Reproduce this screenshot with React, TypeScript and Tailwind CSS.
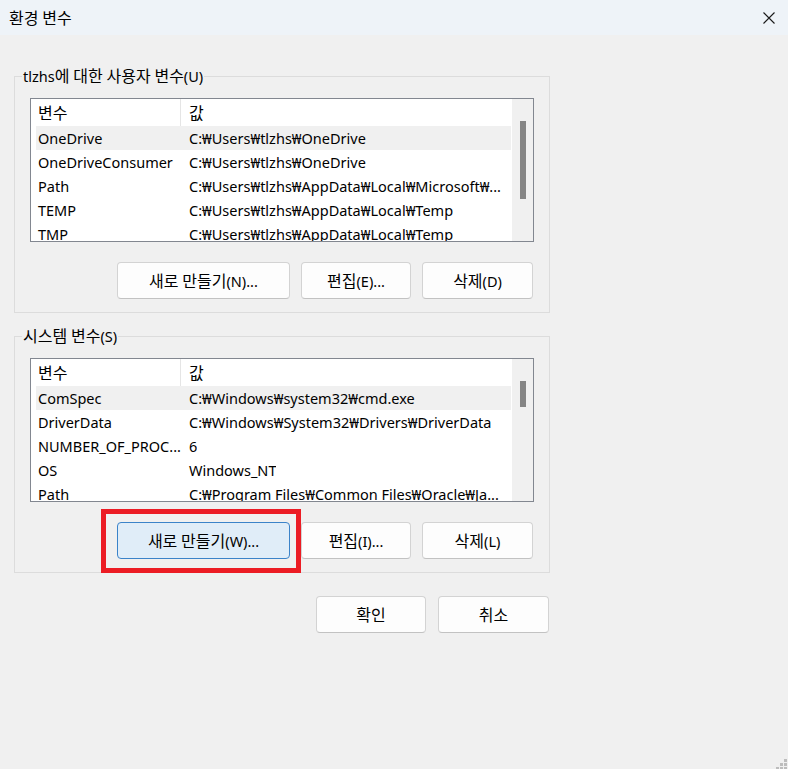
// ─── Environment Variables dialog ───────────────────────────────────────────────

import type { ReactNode } from "react";

// ─── Data ─────────────────────────────────────────────────────────────────────

interface EnvVar {
  name: string;
  value: string;
}

const USER_VARS: EnvVar[] = [
  { name: "OneDrive", value: "C:₩Users₩tlzhs₩OneDrive" },
  { name: "OneDriveConsumer", value: "C:₩Users₩tlzhs₩OneDrive" },
  { name: "Path", value: "C:₩Users₩tlzhs₩AppData₩Local₩Microsoft₩..." },
  { name: "TEMP", value: "C:₩Users₩tlzhs₩AppData₩Local₩Temp" },
  { name: "TMP", value: "C:₩Users₩tlzhs₩AppData₩Local₩Temp" },
];

const SYSTEM_VARS: EnvVar[] = [
  { name: "ComSpec", value: "C:₩Windows₩system32₩cmd.exe" },
  { name: "DriverData", value: "C:₩Windows₩System32₩Drivers₩DriverData" },
  { name: "NUMBER_OF_PROC...", value: "6" },
  { name: "OS", value: "Windows_NT" },
  { name: "Path", value: "C:₩Program Files₩Common Files₩Oracle₩Ja..." },
];

// ─── Mixed text ───────────────────────────────────────────────────────────────
// Hangul glyphs run a touch larger than the Latin ones in the original UI font.

function Txt({ children }: { children: string }) {
  const parts = children.split(/([\uAC00-\uD7A3]+)/);
  return (
    <span>
      {parts.map((p, i) =>
        /[\uAC00-\uD7A3]/.test(p) ? (
          <span key={i} className="text-[16px]">
            {p}
          </span>
        ) : (
          p
        )
      )}
    </span>
  );
}

// ─── Button ───────────────────────────────────────────────────────────────────

function DlgButton({
  children,
  width,
  focused = false,
}: {
  children: string;
  width: string;
  focused?: boolean;
}) {
  return (
    <button
      className={`flex h-[37px] items-center justify-center rounded-[4px] border text-[14.5px] text-black ${width} ${
        focused
          ? "border-[#3b83c9] bg-[#e0edf8]"
          : "border-[#d3d3d3] border-b-[#c2c2c2] bg-[#fdfdfd]"
      }`}
    >
      <Txt>{children}</Txt>
    </button>
  );
}

// ─── List view ────────────────────────────────────────────────────────────────

function VarList({
  rows,
  thumbHeight,
}: {
  rows: EnvVar[];
  thumbHeight: string;
}) {
  return (
    <div className="flex h-[144px] border border-[#828790] bg-white">
      <div className="min-w-0 flex-1 overflow-hidden">
        {/* Header */}
        <div className="flex h-[27px] items-center pl-[5px]">
          <div className="flex h-full w-[145px] items-center border-r border-[#e5e5e5] pl-[2px]">
            <Txt>변수</Txt>
          </div>
          <div className="pl-[8px]">
            <Txt>값</Txt>
          </div>
        </div>
        {/* Rows */}
        <div className="pl-[5px]">
          {rows.map((r, i) => (
            <div
              key={r.name}
              className={`flex h-[24px] items-center whitespace-nowrap pt-px ${i === 0 ? "bg-[#f0f0f0]" : ""}`}
            >
              <div className="w-[145px] overflow-hidden pl-[2px]">{r.name}</div>
              <div className="overflow-hidden pl-[8px]">{r.value}</div>
            </div>
          ))}
        </div>
      </div>

      {/* Scrollbar */}
      <div className="flex w-[22px] shrink-0 justify-center border-l border-white bg-[#f0f0f0]">
        <div className={`mt-[22px] w-[6px] bg-[#858585] ${thumbHeight}`} />
      </div>
    </div>
  );
}

// ─── Group ────────────────────────────────────────────────────────────────────

function VarGroup({
  label,
  rows,
  thumbHeight,
  buttons,
  className = "",
}: {
  label: string;
  rows: EnvVar[];
  thumbHeight: string;
  buttons: ReactNode;
  className?: string;
}) {
  return (
    <fieldset className={`mx-[14px] border border-[#dcdcdc] ${className}`}>
      <legend className="ml-[7px] px-[1px] leading-[20px]">
        <Txt>{label}</Txt>
      </legend>
      <div className="px-[15px] pb-[13px] pt-[12px]">
        <VarList rows={rows} thumbHeight={thumbHeight} />
        <div className="mt-[20px] flex justify-end gap-[11px] pr-[1px]">{buttons}</div>
      </div>
    </fieldset>
  );
}

// ─── App ──────────────────────────────────────────────────────────────────────

export default function App() {
  return (
    <div className="relative h-screen w-full overflow-hidden bg-[#f0f0f0] font-['Noto_Sans','Noto_Sans_CJK_KR',sans-serif] text-[14.5px] text-black">
      {/* Title bar */}
      <header className="flex h-[35px] items-center justify-between bg-[#eef3f8] pl-[9px] pr-[13px]">
        <Txt>환경 변수</Txt>
        <svg viewBox="0 0 12 12" className="h-[12px] w-[12px]" fill="none">
          <path d="M0.5 0.5l11 11M11.5 0.5l-11 11" stroke="#1a1a1a" strokeWidth="1.1" />
        </svg>
      </header>

      <div className="w-[564px] pt-[31px]">
        <VarGroup
          label="tlzhs에 대한 사용자 변수(U)"
          rows={USER_VARS}
          thumbHeight="h-[78px]"
          buttons={
            <>
              <DlgButton width="w-[173px]">새로 만들기(N)...</DlgButton>
              <DlgButton width="w-[110px]">편집(E)...</DlgButton>
              <DlgButton width="w-[111px]">삭제(D)</DlgButton>
            </>
          }
        />

        <VarGroup
          className="mt-[13px]"
          label="시스템 변수(S)"
          rows={SYSTEM_VARS}
          thumbHeight="h-[26px]"
          buttons={
            <>
              <span className="relative">
                <DlgButton width="w-[173px]" focused>
                  새로 만들기(W)...
                </DlgButton>
                {/* Annotation box */}
                <span className="pointer-events-none absolute -bottom-[14px] -left-[16px] -right-[11px] -top-[13px] border-[5px] border-[#ec1c24]" />
              </span>
              <DlgButton width="w-[110px]">편집(I)...</DlgButton>
              <DlgButton width="w-[111px]">삭제(L)</DlgButton>
            </>
          }
        />

        <div className="mt-[23px] flex justify-end gap-[12px] pr-[15px]">
          <DlgButton width="w-[110px]">확인</DlgButton>
          <DlgButton width="w-[111px]">취소</DlgButton>
        </div>
      </div>

      {/* Resize grip */}
      <svg viewBox="0 0 12 10" className="absolute bottom-0 right-0 h-[10px] w-[12px]">
        <rect x="8" y="0" width="3" height="3" fill="#bdbdbd" />
        <rect x="4" y="4" width="3" height="3" fill="#bdbdbd" />
        <rect x="8" y="4" width="3" height="3" fill="#bdbdbd" />
        <rect x="0" y="8" width="3" height="3" fill="#bdbdbd" />
        <rect x="4" y="8" width="3" height="3" fill="#bdbdbd" />
        <rect x="8" y="8" width="3" height="3" fill="#bdbdbd" />
      </svg>
    </div>
  );
}
